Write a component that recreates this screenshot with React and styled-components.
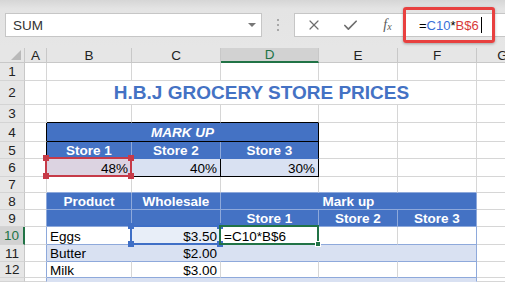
import React from 'react';
import styled, { createGlobalStyle } from 'styled-components';
import { X, Check } from 'lucide-react';

const BLUE = '#4472C4';
const LIGHT = '#D9E1F2';
const LINE = '#8EA9DB';
const BLACK = '#000';
const GREEN = '#217346';

const GlobalStyle = createGlobalStyle`
  * { box-sizing: border-box; }
  html, body { margin: 0; padding: 0; background: #fff; }
  body {
    font-family: "Liberation Sans", Arial, sans-serif;
    width: 505px;
    height: 282px;
    overflow: hidden;
  }
`;

/* Formula bar */
const TopBar = styled.div`
  position: relative;
  height: 48px;
  display: flex;
  align-items: flex-start;
  padding: 13px 0 0 5px;
  background: linear-gradient(#d6d6d6 0, #e4e4e4 9px, #e6e6e6 100%);
`;

const NameBox = styled.div`
  width: 257px;
  height: 24px;
  display: flex;
  align-items: center;
  justify-content: space-between;
  padding: 0 5px 0 7px;
  background: #fff;
  border: 1px solid #c6c6c6;
  font-size: 13.5px;
  color: #333;
`;

const Caret = styled.span`
  width: 0;
  height: 0;
  border-left: 4px solid transparent;
  border-right: 4px solid transparent;
  border-top: 4px solid #777;
`;

const Dots = styled.div`
  width: 32px;
  height: 24px;
  display: flex;
  flex-direction: column;
  align-items: center;
  justify-content: center;
  gap: 3px;

  span {
    width: 2px;
    height: 2px;
    background: #a8a8a8;
  }
`;

const Formula = styled.div`
  flex: 1;
  height: 24px;
  display: flex;
  align-items: center;
  background: #fff;
  border: 1px solid #c6c6c6;
  border-right: none;
`;

const IconSlot = styled.div`
  width: 37px;
  display: flex;
  justify-content: center;
  align-items: center;
  color: #6e6e6e;
`;

const Fx = styled.span`
  font-family: "Liberation Serif", "Times New Roman", serif;
  font-style: italic;
  font-size: 14px;
  color: #5a5a5a;

  sub {
    font-size: 10px;
    vertical-align: -1px;
  }
`;

const FormulaText = styled.div`
  padding-left: 13px;
  font-size: 13px;
  display: flex;
  align-items: center;
  color: #000;
`;

const Ref = styled.span`
  color: ${p => p.$c};
`;

const Cursor = styled.span`
  width: 1px;
  height: 16px;
  margin-left: 2px;
  background: #000;
`;

const Callout = styled.div`
  position: absolute;
  left: 403px;
  top: 7px;
  width: 92px;
  height: 36px;
  border: 3px solid #e8403f;
  border-radius: 3px;
  box-shadow: 0 1px 3px rgba(0, 0, 0, 0.3);
`;

/* Sheet grid */
const Sheet = styled.div`
  display: grid;
  grid-template-columns: 25px 22px 85px 89px 98px 79px 79px 52px;
  grid-template-rows: 15px 18px 24px 18px 19px 17px 18px 16px 17px 17px 18px 17px 16px 4px;
`;

const ColHead = styled.div`
  position: relative;
  display: flex;
  align-items: center;
  justify-content: center;
  font-size: 13.5px;
  color: ${p => (p.$active ? GREEN : '#222')};
  background: ${p => (p.$active ? '#d2d2d2' : '#e6e6e6')};
  border-right: 1px solid #c8c8c8;
  border-bottom: ${p => (p.$active ? `2px solid ${GREEN}` : '1px solid #c8c8c8')};
`;

const Corner = styled(ColHead)`
  align-items: flex-end;
  justify-content: flex-end;
  padding: 0 3px 2px 0;
`;

const RowHead = styled.div`
  display: flex;
  align-items: center;
  justify-content: center;
  font-size: 13.5px;
  color: ${p => (p.$active ? GREEN : '#222')};
  background: ${p => (p.$active ? '#d2d2d2' : '#e6e6e6')};
  border-right: ${p => (p.$active ? `2px solid ${GREEN}` : '1px solid #c8c8c8')};
  border-bottom: 1px solid #d4d4d4;
`;

const Cell = styled.div`
  position: relative;
  grid-column: span ${p => p.$span || 1};
  display: flex;
  align-items: center;
  justify-content: ${p => (p.$align === 'right' ? 'flex-end' : p.$align === 'center' ? 'center' : 'flex-start')};
  padding: 1px 3px 0;
  white-space: nowrap;
  font-size: ${p => p.$size || 13.5}px;
  font-weight: ${p => (p.$bold ? 700 : 400)};
  font-style: ${p => (p.$italic ? 'italic' : 'normal')};
  color: ${p => p.$color || '#000'};
  background: ${p => p.$bg || '#fff'};
  border-right: 1px solid ${p => p.$br || '#d6d6d6'};
  border-bottom: 1px solid ${p => p.$bb || '#d6d6d6'};
`;

const Head = styled(Cell).attrs({ $bold: true, $align: 'center', $color: '#fff', $bg: BLUE })``;

const Title = styled(Cell)`
  font-size: 19px;
  font-weight: 700;
  color: ${BLUE};
  justify-content: center;
`;

const Sel = styled.div`
  position: absolute;
  z-index: 2;
  top: -2px;
  left: -2px;
  right: -1px;
  bottom: -1px;
  border: 2px solid ${p => p.$c};
  pointer-events: none;
`;

const Handle = styled.span`
  position: absolute;
  width: 6px;
  height: 6px;
  background: ${p => p.$c};
  ${p => (p.$t ? 'top: -4px;' : 'bottom: -4px;')}
  ${p => (p.$l ? 'left: -4px;' : 'right: -4px;')}
`;

const FillHandle = styled.span`
  position: absolute;
  right: -4px;
  bottom: -4px;
  width: 6px;
  height: 6px;
  background: ${GREEN};
  border: 1px solid #fff;
`;

const RangeBox = ({ c }) => (
  <Sel $c={c}>
    <Handle $c={c} $t $l />
    <Handle $c={c} $t />
    <Handle $c={c} $l />
    <Handle $c={c} />
  </Sel>
);

const blanks = (n, props = {}) =>
  Array.from({ length: n }, (_, i) => <Cell key={`b${i}`} {...props} />);

export default function App() {
  return (
    <>
      <GlobalStyle />
      <TopBar>
        <NameBox>
          SUM
          <Caret />
        </NameBox>
        <Dots>
          <span />
          <span />
          <span />
        </Dots>
        <Formula>
          <IconSlot><X size={16} strokeWidth={1.8} /></IconSlot>
          <IconSlot><Check size={17} strokeWidth={2.4} /></IconSlot>
          <IconSlot><Fx>f<sub>x</sub></Fx></IconSlot>
          <FormulaText>
            =<Ref $c="#3a6fd8">C10</Ref>*<Ref $c="#d83a3a">B$6</Ref>
            <Cursor />
          </FormulaText>
        </Formula>
        <Callout />
      </TopBar>

      <Sheet>
        <Corner>
          <svg width="10" height="10" viewBox="0 0 10 10">
            <polygon points="10,0 10,10 0,10" fill="#b9b9b9" />
          </svg>
        </Corner>
        <ColHead>A</ColHead>
        <ColHead>B</ColHead>
        <ColHead>C</ColHead>
        <ColHead $active>D</ColHead>
        <ColHead>E</ColHead>
        <ColHead>F</ColHead>
        <ColHead>G</ColHead>

        {/* 1 */}
        <RowHead>1</RowHead>
        {blanks(7)}

        {/* 2 */}
        <RowHead>2</RowHead>
        <Cell />
        <Title $span={5}>H.B.J GROCERY STORE PRICES</Title>
        <Cell />

        {/* 3 */}
        <RowHead>3</RowHead>
        <Cell />
        {blanks(3, { $bb: BLACK })}
        {blanks(3)}

        {/* 4 */}
        <RowHead>4</RowHead>
        <Cell $br={BLACK} />
        <Head $span={3} $italic $br={BLACK} $bb={BLACK}>MARK UP</Head>
        {blanks(3)}

        {/* 5 */}
        <RowHead>5</RowHead>
        <Cell $br={BLACK} />
        <Head $br={LINE} $bb={BLUE}>Store 1</Head>
        <Head $br={LINE} $bb={BLUE}>Store 2</Head>
        <Head $br={BLACK} $bb={BLUE}>Store 3</Head>
        {blanks(3)}

        {/* 6 */}
        <RowHead>6</RowHead>
        <Cell $br={BLACK} />
        <Cell $align="right" $bg="#dcd3e1" $br={BLACK} $bb={BLACK}>
          48%
          <RangeBox c="#c63a48" />
        </Cell>
        <Cell $align="right" $bg={LIGHT} $br={BLACK} $bb={BLACK}>40%</Cell>
        <Cell $align="right" $bg={LIGHT} $br={BLACK} $bb={BLACK}>30%</Cell>
        {blanks(3)}

        {/* 7 */}
        <RowHead>7</RowHead>
        <Cell />
        {blanks(5, { $bb: LINE })}
        <Cell />

        {/* 8 */}
        <RowHead>8</RowHead>
        <Cell $br={LINE} />
        <Head $br={LINE} $bb={LINE}>Product</Head>
        <Head $br={LINE} $bb={LINE}>Wholesale</Head>
        <Head $span={3} $br={LINE} $bb={LINE}>Mark up</Head>
        <Cell />

        {/* 9 */}
        <RowHead>9</RowHead>
        <Cell $br={LINE} />
        <Head $br={LINE} $bb={LINE} />
        <Head $br={LINE} $bb={LINE} />
        <Head $br={LINE} $bb={LINE}>Store 1</Head>
        <Head $br={LINE} $bb={LINE}>Store 2</Head>
        <Head $br={LINE} $bb={LINE}>Store 3</Head>
        <Cell />

        {/* 10 */}
        <RowHead $active>10</RowHead>
        <Cell $br={LINE} />
        <Cell $bb={LINE}>Eggs</Cell>
        <Cell $align="right" $bg="#e8eef8" $bb={LINE}>
          $3.50
          <RangeBox c="#3f6fc6" />
        </Cell>
        <Cell $bb={LINE}>
          =C10*B$6
          <Sel $c={GREEN}>
            <FillHandle />
          </Sel>
        </Cell>
        <Cell $bb={LINE} />
        <Cell $bb={LINE} $br={LINE} />
        <Cell />

        {/* 11 */}
        <RowHead>11</RowHead>
        <Cell $br={LINE} />
        <Cell $bg={LIGHT} $br={LIGHT} $bb={LINE}>Butter</Cell>
        <Cell $bg={LIGHT} $br={LIGHT} $bb={LINE} $align="right">$2.00</Cell>
        <Cell $bg={LIGHT} $br={LIGHT} $bb={LINE} />
        <Cell $bg={LIGHT} $br={LIGHT} $bb={LINE} />
        <Cell $bg={LIGHT} $br={LINE} $bb={LINE} />
        <Cell />

        {/* 12 */}
        <RowHead>12</RowHead>
        <Cell $br={LINE} />
        <Cell $bb={LINE}>Milk</Cell>
        <Cell $bb={LINE} $align="right">$3.00</Cell>
        <Cell $bb={LINE} />
        <Cell $bb={LINE} />
        <Cell $bb={LINE} $br={LINE} />
        <Cell />

        {/* 13 (top edge only) */}
        <RowHead />
        <Cell $br={LINE} />
        {blanks(4, { $bg: LIGHT, $br: LIGHT, $bb: LIGHT })}
        <Cell $bg={LIGHT} $br={LINE} $bb={LIGHT} />
        <Cell />
      </Sheet>
    </>
  );
}
